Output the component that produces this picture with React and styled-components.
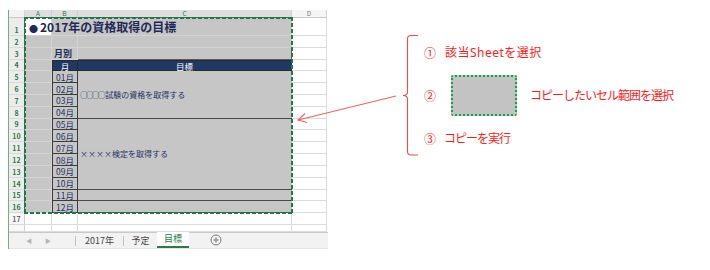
import styled, { createGlobalStyle } from 'styled-components';

const GlobalStyle = createGlobalStyle`
  body {
    margin: 0;
    background: #fff;
    font-family: "Noto Sans", "Noto Sans CJK JP", sans-serif;
  }
`;

const Page = styled.div`
  position: relative;
  display: flex;
  align-items: flex-start;
  width: 710px;
  height: 270px;
  overflow: hidden;
`;

const Window = styled.div`
  margin: 10px 0 0 8px;
  width: 319px;
  height: 239px;
  display: flex;
  flex-direction: column;
  border-left: 1px solid #79aa86;
`;

const Grid = styled.div`
  display: grid;
  grid-template-columns: 16px 27px 26px 214px 35px;
  grid-template-rows: 8.3px 17.7px repeat(16, 11.82px) 6.8px;
  font-family: "Noto Sans CJK JP", sans-serif;
`;

const Corner = styled.div`
  grid-column: 1;
  grid-row: 1;
  background: #f3f3f3;
  border-right: 1px solid #d6d6d6;
  border-bottom: 1px solid #c8c8c8;
  box-sizing: border-box;
`;

const ColHead = styled.div`
  grid-row: 1;
  grid-column: ${(p) => p.$col};
  background: ${(p) => (p.$sel ? '#dedede' : '#f5f5f5')};
  color: ${(p) => (p.$sel ? '#2d7a48' : '#7a7a7a')};
  border-right: 1px solid #d0d0d0;
  border-bottom: ${(p) => (p.$sel ? '1px solid #2d7a48' : '1px solid #c8c8c8')};
  box-sizing: border-box;
  font-size: 6.5px;
  line-height: 7px;
  text-align: center;
`;

const RowHead = styled.div`
  grid-column: 1;
  grid-row: ${(p) => p.$row + 1};
  background: ${(p) => (p.$sel ? '#ececec' : '#f8f8f8')};
  color: ${(p) => (p.$sel ? '#2d7a48' : '#6a6a6a')};
  border-right: 1px solid ${(p) => (p.$sel ? '#2d7a48' : '#d0d0d0')};
  border-bottom: 1px solid #dadada;
  box-sizing: border-box;
  font-size: 7px;
  font-weight: 700;
  display: flex;
  align-items: flex-end;
  justify-content: center;
  line-height: 9px;
  overflow: hidden;
`;

const Cell = styled.div`
  grid-column: ${(p) => p.$col};
  grid-row: ${(p) => p.$row + 1} / span ${(p) => p.$span || 1};
  background: ${(p) => p.$bg || '#fff'};
  border-right: 1px solid ${(p) => p.$line || '#dcdcdc'};
  border-bottom: 1px solid ${(p) => p.$line || '#dcdcdc'};
  box-sizing: border-box;
`;

const HeadCell = styled(Cell)`
  background: #203864;
  border-top: 1px solid #2a2a2a;
  border-left: ${(p) => (p.$first ? '1px solid #2a2a2a' : 'none')};
  border-right: 1px solid #2a2a2a;
  border-bottom: 1px solid #2a2a2a;
  color: #fff;
  font-size: 8.5px;
  display: flex;
  align-items: center;
  justify-content: center;
`;

const MonthCell = styled(Cell)`
  background: #c6c6c6;
  border-left: 1px solid #3c3c3c;
  border-right: 1px solid #3c3c3c;
  border-bottom: 1px solid #3c3c3c;
  color: #1f3264;
  font-size: 8.5px;
  line-height: 10px;
  display: flex;
  align-items: center;
  justify-content: center;
`;

const GoalCell = styled(Cell)`
  background: #c6c6c6;
  border-right: none;
  border-bottom: 1px solid #4a4a4a;
  color: #1f3264;
  font-size: 8px;
  display: flex;
  align-items: center;
  padding-left: 2px;
  white-space: nowrap;
`;

const Marks = styled.span`
  letter-spacing: -2.2px;
  margin-right: 2px;
`;

const Title = styled.div`
  grid-column: 2 / 5;
  grid-row: 2;
  z-index: 1;
  padding-left: 4px;
  font-size: 12px;
  font-weight: 700;
  color: #1d2a57;
  line-height: 17px;
  white-space: nowrap;
`;

const Dot = styled.span`
  font-size: 9px;
  margin-right: 2px;
`;

const Label = styled.div`
  grid-column: 3;
  grid-row: 4;
  z-index: 1;
  padding-left: 2px;
  font-size: 9px;
  font-weight: 700;
  color: #1d2a57;
  line-height: 12px;
`;

const dash = (dir) =>
  `repeating-linear-gradient(${dir}, #23754a 0 4px, transparent 4px 6px)`;

// marching-ants selection over A1:C16
const Selection = styled.div`
  grid-column: 2 / 5;
  grid-row: 2 / 18;
  z-index: 2;
  margin: -1px;
  pointer-events: none;
  background:
    ${dash('90deg')} top left / 100% 2px no-repeat,
    ${dash('90deg')} bottom left / 100% 2px no-repeat,
    ${dash('180deg')} top left / 2px 100% no-repeat,
    ${dash('180deg')} top right / 2px 100% no-repeat;
`;

const TabBar = styled.div`
  height: 16px;
  display: flex;
  align-items: stretch;
  background: #f2f2f2;
  border-top: 1px solid #c9c9c9;
  border-bottom: 1px solid #e4e4e4;
  font-family: "Noto Sans CJK JP", sans-serif;
  font-size: 9px;
  color: #454545;
`;

const Nav = styled.div`
  width: 66px;
  display: flex;
  align-items: center;
  gap: 13px;
  padding-left: 17px;
  box-sizing: border-box;
  color: #b5b5b5;
  font-size: 6px;
`;

const Sep = styled.div`
  width: 1px;
  margin: 3px 0 2px;
  background: #c4c4c4;
`;

const Tab = styled.div`
  width: ${(p) => p.$w}px;
  display: flex;
  align-items: center;
  justify-content: center;
  box-sizing: border-box;
  background: ${(p) => (p.$active ? '#fff' : 'transparent')};
  color: ${(p) => (p.$active ? '#2d7a48' : '#454545')};
  border-bottom: ${(p) => (p.$active ? '2px solid #2d7a48' : 'none')};
  margin-top: ${(p) => (p.$active ? '-1px' : '0')};
`;

const Add = styled.div`
  margin-left: 21px;
  display: flex;
  align-items: center;
`;

const Annotation = styled.div`
  display: flex;
  align-items: flex-start;
  margin: 34px 0 0 69px;
`;

const Steps = styled.div`
  margin: 10px 0 0 5px;
  display: flex;
  flex-direction: column;
  gap: 14px;
  font-family: "Noto Sans", "Noto Sans CJK JP", sans-serif;
  font-size: 12px;
  color: #ff1a1a;
`;

const Step = styled.div`
  display: flex;
  align-items: center;
  height: ${(p) => p.$h || 16}px;
  white-space: nowrap;
`;

const StepText = styled.span`
  letter-spacing: ${(p) => p.$ls || 0}px;
`;

const Num = styled.span`
  width: ${(p) => p.$w}px;
  font-family: "Noto Sans CJK JP", sans-serif;
`;

const RangeBox = styled.div`
  width: 62px;
  height: 37px;
  margin-right: 13px;
  background: #c3c3c3;
  border: 2px dotted #13a545;
  border-radius: 2px;
`;

const Overlay = styled.svg`
  position: absolute;
  left: 0;
  top: 0;
  pointer-events: none;
`;

const months = ['01月', '02月', '03月', '04月', '05月', '06月', '07月', '08月', '09月', '10月', '11月', '12月'];
const GRAY = '#c6c6c6';
const GRAY_LINE = '#d3d3d3';

function Sheet() {
  const rows = Array.from({ length: 17 }, (_, i) => i + 1);
  return (
    <Grid>
      <Corner />
      {['A', 'B', 'C', 'D'].map((c, i) => (
        <ColHead key={c} $col={i + 2} $sel={c !== 'D'}>{c}</ColHead>
      ))}
      {rows.map((r) => (
        <RowHead key={r} $row={r} $sel={r <= 16}>{r}</RowHead>
      ))}
      <RowHead $row={18} />

      {rows.slice(0, 16).map((r) => (
        <Cell key={'a' + r} $col={2} $row={r} $bg={r === 1 ? '#fff' : GRAY} $line={GRAY_LINE} />
      ))}
      {[1, 2, 3].map((r) => (
        <Cell key={'b' + r} $col={3} $row={r} $bg={GRAY} $line={GRAY_LINE} />
      ))}
      {[1, 2].map((r) => (
        <Cell key={'c' + r} $col={4} $row={r} $bg={GRAY} $line={GRAY_LINE} />
      ))}
      <Cell $col={4} $row={3} $bg={GRAY} $line="#5a5a5a" />
      <Title><Dot>●</Dot>2017年の資格取得の目標</Title>
      <Label>月別</Label>

      <HeadCell $col={3} $row={4} $first>月</HeadCell>
      <HeadCell $col={4} $row={4}>目標</HeadCell>

      {months.map((m, i) => (
        <MonthCell key={m} $col={3} $row={i + 5}>{m}</MonthCell>
      ))}
      <GoalCell $col={4} $row={5} $span={4}><Marks>○○○○</Marks>試験の資格を取得する</GoalCell>
      <GoalCell $col={4} $row={9} $span={6}>××××検定を取得する</GoalCell>
      <GoalCell $col={4} $row={15} />
      <GoalCell $col={4} $row={16} />

      {rows.map((r) => (
        <Cell key={'d' + r} $col={5} $row={r} />
      ))}
      <Cell $col={5} $row={18} />
      {[17, 18].map((r) =>
        [2, 3, 4].map((c) => <Cell key={r + '-' + c} $col={c} $row={r} />)
      )}
      <Selection />
    </Grid>
  );
}

function Tabs() {
  return (
    <TabBar>
      <Nav>
        <span>◀</span>
        <span>▶</span>
      </Nav>
      <Sep />
      <Tab $w={47}>2017年</Tab>
      <Sep />
      <Tab $w={33}>予定</Tab>
      <Tab $w={32} $active>目標</Tab>
      <Add>
        <svg width="12" height="12" viewBox="0 0 12 12">
          <circle cx="6" cy="6" r="5" fill="none" stroke="#7b7b7b" strokeWidth="1" />
          <path d="M6 3.3v5.4M3.3 6h5.4" stroke="#7b7b7b" strokeWidth="1.1" />
        </svg>
      </Add>
    </TabBar>
  );
}

export default function App() {
  return (
    <>
      <GlobalStyle />
      <Page>
        <Window>
          <Sheet />
          <Tabs />
        </Window>
        <Annotation>
          <svg width="22" height="123" viewBox="0 0 22 123">
            <path
              d="M21 1.5 H14 Q10.5 1.5 10.5 5 V58 Q10.5 61.5 6 61.5 Q10.5 61.5 10.5 65 V117.5 Q10.5 121 14 121 H21"
              fill="none"
              stroke="#ea4d4d"
              strokeWidth="1.1"
            />
          </svg>
          <Steps>
            <Step>
              <Num $w={21}>①</Num>
              <StepText $ls={0.5}>該当Sheetを選択</StepText>
            </Step>
            <Step $h={42}>
              <Num $w={27}>②</Num>
              <RangeBox />
              <StepText $ls={-1}>コピーしたいセル範囲を選択</StepText>
            </Step>
            <Step>
              <Num $w={20}>③</Num>
              <StepText $ls={-1}>コピーを実行</StepText>
            </Step>
          </Steps>
        </Annotation>
        <Overlay width="710" height="270">
          <path d="M396 96 L298 120" stroke="#f06262" strokeWidth="1.1" fill="none" />
          <path d="M305 113.5 L298 120 L307 122.5" stroke="#f06262" strokeWidth="1.1" fill="none" />
        </Overlay>
      </Page>
    </>
  );
}
